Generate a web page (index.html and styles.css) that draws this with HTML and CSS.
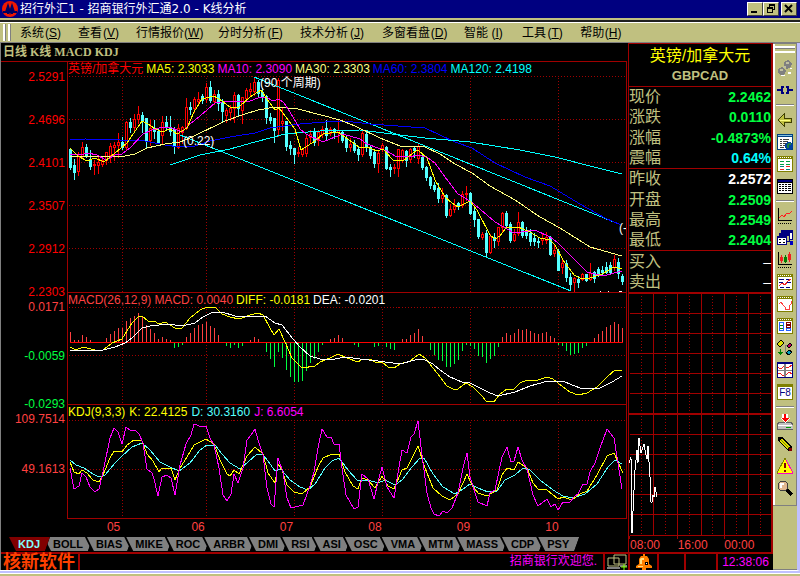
FILE: index.html
```html
<!DOCTYPE html>
<html lang="zh-CN">
<head>
  <meta charset="UTF-8">
  <meta name="viewport" content="width=device-width, initial-scale=1.0">
  <title>招行外汇1 - 招商银行外汇通2.0 - K线分析</title>
  <link rel="stylesheet" href="styles.css">
</head>
<body>

<header class="titlebar">
  <svg class="logo" width="16" height="16" viewBox="0 0 16 16">
    <circle cx="8" cy="8" r="8" fill="#f01800"/>
    <path d="M1 11h3l2-6 2 6 2-6 2 6h3M6 5v8M10 5v8" fill="none" stroke="#000060" stroke-width="2"/>
  </svg>
  <h1>招行外汇1 - 招商银行外汇通2.0 - K线分析</h1>
  <div class="window-buttons">
    <button aria-label="最小化"><svg width="12" height="10"><path d="M2 7h6v2H2z"/></svg></button>
    <button aria-label="还原"><svg width="12" height="10"><path d="M4 0h6v6H8V5h1V2H5v1H4zM2 3h6v6H2zm1 2v3h4V5z" fill-rule="evenodd"/></svg></button>
    <button class="close" aria-label="关闭"><svg width="12" height="10"><path d="M2 1l7 7M9 1L2 8" stroke="#000" stroke-width="2"/></svg></button>
  </div>
</header>

<nav class="menubar">
  <span class="grip"></span>
  <button>系统<span class="key">(<u>S</u>)</span></button>
  <button>查看<span class="key">(<u>V</u>)</span></button>
  <button>行情报价<span class="key">(<u>W</u>)</span></button>
  <button>分时分析<span class="key">(<u>F</u>)</span></button>
  <button>技术分析<span class="key">(<u>J</u>)</span></button>
  <button>多窗看盘<span class="key">(<u>D</u>)</span></button>
  <button>智能<span class="key">(<u>I</u>)</span></button>
  <button>工具<span class="key">(<u>T</u>)</span></button>
  <button>帮助<span class="key">(<u>H</u>)</span></button>
</nav>

<div class="workspace">
  <div class="content">
    <div class="panels">

      <!-- K线 / MACD / KDJ -->
      <main class="charts">
        <h2 class="subtitle">日线 K线 MACD KDJ</h2>

        <section class="pane pane-price">
          <div class="axis red"><span>2.5291</span><span>2.4696</span><span>2.4101</span><span>2.3507</span><span>2.2912</span><span>2.2303</span></div>
          <div class="plot">
            <div class="legend">
              <span class="red">英镑/加拿大元</span>
              <span class="yellow">MA5: 2.3033</span>
              <span class="magenta">MA10: 2.3090</span>
              <span class="cream">MA30: 2.3303</span>
              <span class="blue">MA60: 2.3804</span>
              <span class="aqua">MA120: 2.4198</span>
            </div>
            <svg viewBox="68 62 558 230" preserveAspectRatio="none">
              <g class="grid" transform="translate(.5 .5)">
                <path d="M68 76H626M68 119H626M68 162H626M68 205H626M68 248H626"/>
                <path d="M122 77V292M206 77V292M294 77V292M382 77V292M470 77V292M558 77V292"/>
              </g>
              <path id="candles-up" fill="#ff0000"/>
              <path id="candles-hole" fill="#000"/>
              <path id="candles-down" fill="#54ffff"/>
              <g class="lines">
                <polyline class="s-aqua" points="180,135 571,291"/>
                <polyline class="s-aqua" points="254,77 614,222"/>
                <polyline class="s-blue" points="70,140 85,139 120,140 145,141 165,145 180,147 195,146 210,141 230,137 255,133 270,128 300,124 325,122 345,121 370,124 425,128 455,142 472,148 495,163 525,177 550,186 580,204 605,218 621,225"/>
                <polyline class="s-aqua" points="170,165 200,155 230,149 255,142 285,134 320,131 360,130 400,135 425,138 470,142 520,150 555,157 590,166 622,174"/>
                <polyline class="s-cream" points="70,156 125,156 135,154 147,148 165,144 180,142 190,138 225,121 245,114 258,110 275,107 298,109 340,120 355,126 380,138 400,146 425,147 440,154 455,164 472,173 490,186 515,200 540,217 560,228 590,247 622,256"/>
                <polyline class="s-magenta" points="70,154 80,155 88,153 97,155 106,160 115,155 122,154 130,148 143,134 152,130 163,127 172,128 182,132 190,124 200,116 215,103 222,102 250,101 258,98 266,97 273,101 279,99 284,103 290,112 300,129 306,134 323,142 335,137 343,134 360,139 367,144 378,148 387,151 395,156 410,157 417,155 427,157 435,163 445,177 458,194 470,201 480,209 495,222 514,233 535,230 550,237 557,242 575,260 587,272 603,276 622,271"/>
                <polyline class="s-yellow" points="70,148 78,156 87,161 95,158 104,162 115,153 127,143 142,121 148,124 154,128 162,132 170,129 177,134 187,128 194,112 202,99 214,96 222,101 230,107 239,107 250,97 261,90 267,99 275,110 279,108 295,129 301,150 315,141 323,134 338,132 345,137 359,147 367,147 377,151 383,149 393,160 403,161 413,153 418,150 427,158 435,180 445,197 452,203 458,207 470,201 477,210 490,235 495,239 500,236 506,228 518,227 530,232 540,238 550,240 555,245 563,260 574,275 582,279 590,278 602,274 614,267 622,269"/>
              </g>
              <g class="notes">
                <text x="183" y="145">(0.22)</text>
                <text x="260" y="87">(90 个周期)</text>
                <text x="619" y="232">(-</text>
              </g>
              <path d="M600 291h1v1h-1zM608 291h1v1h-1zM619 291h3v1h-3z" fill="#fff"/>
            </svg>
          </div>
        </section>

        <section class="pane pane-macd">
          <div class="axis"><span class="coral">0.0171</span><span class="green">-0.0059</span><span class="green">-0.0293</span></div>
          <div class="plot">
            <div class="legend">
              <span class="coral">MACD(26,12,9)</span>
              <span class="coral">MACD: 0.0040</span>
              <span class="yellow">DIFF: -0.0181</span>
              <span class="white">DEA: -0.0201</span>
            </div>
            <svg viewBox="68 293 558 111" preserveAspectRatio="none">
              <g class="grid" transform="translate(.5 .5)">
                <path d="M68 307H626M68 355H626"/>
                <path d="M122 308V404M206 308V404M294 308V404M382 308V404M470 308V404M558 308V404"/>
              </g>
              <path id="macd-up" fill="#ff4040"/>
              <path id="macd-down" fill="#00ff40"/>
              <path d="M70 342h553v1H70z" fill="#ff0000"/>
              <g class="lines">
                <polyline class="s-yellow" points="70,347 76,350 83,347 95,350 103,350 112,343 122,339 132,323 138,317 142,316 148,321 154,321 159,324 165,322 175,328 182,328 190,318 200,310 207,307 215,307 222,314 230,317 239,319 250,315 258,313 263,315 270,328 274,335 279,329 285,342 292,358 302,368 315,366 320,362 330,358 338,354 347,358 358,362 363,359 370,359 377,363 382,362 388,367 394,368 400,364 410,361 419,354 425,358 437,373 447,386 453,389 458,389 466,383 473,387 482,396 486,401 494,402 500,394 507,389 514,389 520,383 527,380 538,380 547,377 553,379 563,387 570,392 578,395 587,393 597,387 607,377 615,370 622,370"/>
                <polyline class="s-white" points="70,351 85,350 103,350 115,347 125,343 132,338 142,328 150,326 168,324 182,326 195,323 203,317 213,312 222,312 235,316 250,316 265,316 275,323 282,325 293,339 300,347 310,356 320,359 330,360 345,357 360,359 378,361 400,364 415,360 423,359 433,364 440,370 450,377 462,382 470,383 480,388 490,393 498,396 515,392 530,386 548,381 563,381 572,385 583,389 600,388 612,382 622,376"/>
              </g>
            </svg>
          </div>
        </section>

        <section class="pane pane-kdj">
          <div class="axis coral"><span>109.7514</span><span>49.1613</span><span></span></div>
          <div class="plot">
            <div class="legend">
              <span class="yellow">KDJ(9,3,3)</span>
              <span class="yellow">K: 22.4125</span>
              <span class="cyan">D: 30.3160</span>
              <span class="magenta">J: 6.6054</span>
            </div>
            <svg viewBox="68 405 558 113" preserveAspectRatio="none">
              <g class="grid" transform="translate(.5 .5)">
                <path d="M68 420H626M68 469H626"/>
                <path d="M122 421V518M206 421V518M294 421V518M382 421V518M470 421V518M558 421V518"/>
              </g>
              <g class="lines">
                <polyline class="s-cyan" points="70,460 76,465 84,468 93,474 99,477 105,475 115,463 122,456 132,447 142,443 150,450 160,462 170,467 179,471 190,463 200,450 207,445 215,445 222,454 230,463 240,469 248,462 256,455 262,454 268,461 275,471 281,469 290,480 300,487 308,490 315,484 325,468 332,461 339,458 348,470 358,481 368,480 378,483 385,480 395,485 402,480 412,467 420,458 424,458 433,474 443,487 455,494 463,489 470,484 478,488 488,492 497,491 505,480 515,475 523,468 530,470 540,480 553,490 563,496 573,498 585,494 597,484 608,467 615,460 622,464"/>
                <polyline class="s-yellow" points="70,462 74,472 79,474 82,470 87,473 93,480 99,482 103,475 110,458 114,451 122,452 127,445 134,440 142,441 147,454 153,461 159,472 162,468 171,468 175,480 180,468 187,457 194,445 206,439 214,444 220,460 227,474 230,476 234,470 239,474 243,465 247,456 255,447 263,454 268,473 275,483 278,464 282,470 287,485 294,492 302,494 310,487 318,467 323,458 332,454 339,454 345,472 353,486 358,489 362,478 368,480 375,488 382,476 388,486 394,489 402,470 407,468 418,446 425,468 433,488 442,496 450,500 458,494 467,474 472,485 478,493 487,496 497,490 502,475 507,468 514,470 518,462 527,468 533,483 538,489 547,490 558,499 563,497 572,500 580,494 587,491 597,475 607,456 614,453 618,462 623,473"/>
                <polyline class="s-magenta" points="70,468 74,489 79,486 82,473 86,477 90,487 95,492 99,489 103,472 110,438 114,428 118,432 122,444 126,427 130,430 135,430 139,434 143,443 147,469 152,473 154,479 158,496 162,477 167,475 171,478 175,495 180,465 186,444 191,435 194,424 202,427 206,426 210,438 214,445 219,468 223,495 227,501 231,494 234,474 238,483 243,468 247,440 251,435 255,429 258,440 263,455 267,488 271,504 274,507 278,458 283,472 287,498 291,508 303,505 310,486 314,472 318,448 322,429 327,437 331,437 334,444 339,444 342,468 346,495 354,509 358,507 362,474 368,479 374,499 378,482 382,467 387,487 394,498 398,473 402,450 407,453 411,437 414,434 418,421 422,455 427,493 431,508 434,514 439,516 443,511 447,513 452,508 458,493 463,468 467,453 470,477 478,502 487,506 490,493 495,490 502,457 507,447 511,462 514,461 518,447 522,460 527,469 533,495 538,506 547,499 551,507 555,504 558,510 563,502 570,502 574,497 578,494 583,484 587,484 590,472 595,463 600,448 607,429 614,438 618,463 622,489"/>
              </g>
            </svg>
          </div>
        </section>

        <div class="months"><span>05</span><span>06</span><span>07</span><span>08</span><span>09</span><span>10</span></div>

        <div class="tabs">
          <button class="active"><span>KDJ</span></button>
          <button><span>BOLL</span></button>
          <button><span>BIAS</span></button>
          <button><span>MIKE</span></button>
          <button><span>ROC</span></button>
          <button><span>ARBR</span></button>
          <button><span>DMI</span></button>
          <button><span>RSI</span></button>
          <button><span>ASI</span></button>
          <button><span>OSC</span></button>
          <button><span>VMA</span></button>
          <button><span>MTM</span></button>
          <button><span>MASS</span></button>
          <button><span>CDP</span></button>
          <button><span>PSY</span></button>
        </div>
      </main>

      <!-- 报价 -->
      <aside class="quote">
        <div class="quote-head">
          <h2>英镑/加拿大元</h2>
          <h3>GBPCAD</h3>
        </div>
        <table class="quote-table">
          <tbody>
            <tr><th>现价</th><td class="green">2.2462</td></tr>
            <tr><th>涨跌</th><td class="green">0.0110</td></tr>
            <tr><th>涨幅</th><td class="green">-0.4873%</td></tr>
            <tr><th>震幅</th><td class="aqua">0.64%</td></tr>
          </tbody>
          <tbody>
            <tr><th>昨收</th><td class="white">2.2572</td></tr>
            <tr><th>开盘</th><td class="green">2.2509</td></tr>
            <tr><th>最高</th><td class="green">2.2549</td></tr>
            <tr><th>最低</th><td class="green">2.2404</td></tr>
          </tbody>
          <tbody>
            <tr><th>买入</th><td class="white dash">–</td></tr>
            <tr><th>卖出</th><td class="white dash">–</td></tr>
          </tbody>
        </table>
        <svg class="intraday" viewBox="629 292 142 247" preserveAspectRatio="none">
          <g class="solid" transform="translate(.5 .5)">
            <path d="M653 293V535M677 293V538M701 293V535M724 293V538M748 293V535M629 535V538"/>
            <path d="M629 313H771M629 333H771M629 353H771M629 373H771M629 393H771M629 434H771M629 454H771M629 474H771M629 494H771M629 514H771M629 535H771"/>
          </g>
          <path d="M629 292h142v2H629zM629 413h142v2H629z" fill="#a00000"/>
          <g class="grid" transform="translate(.5 .5)">
            <path d="M641 295V535M665 295V535M689 295V535M712 295V535M736 295V535M760 295V535"/>
          </g>
          <g class="lines">
            <polyline class="s-white" points="629,463 631,457 632,533 634,490 635,470 637,450 638,463 639,438 641,453 644,444 645,450 647,459 648,446 650,477 651,502 652,502 653,495 654,497 655,487 657,497"/>
          </g>
        </svg>
        <div class="times"><span>08:00</span><span>16:00</span><span>00:00</span></div>
      </aside>
    </div>

    <footer class="status">
      <strong>核新软件</strong>
      <span class="message">招商银行欢迎您.</span>
      <span class="cell cell-net">
        <svg width="22" height="16" viewBox="0 0 22 16">
          <path d="M8 1h12v9H8zM2 4h11v8H2z" fill="#000" stroke="#c0c080" stroke-width="1"/>
          <path d="M1 13h13v2H1zM14 11h7v2h-7z" fill="#808080"/>
          <path d="M15 13h6M18 10v6" stroke="#80ff00"/>
        </svg>
      </span>
      <span class="cell cell-bell">
        <svg width="16" height="16" viewBox="0 0 16 16">
          <path d="M7 0h2v2h2l2 3v5l3 2v2H10v2H6v-2H0v-2l3-2V5l2-3h2z" fill="#ff8000"/>
          <path d="M5 4h3v2H6v4H4V5zM2 12h5v1H2z" fill="#ffe080"/>
          <path d="M9 8h3v3H9z" fill="#000"/><path d="M10 9h1v1h-1z" fill="#fff"/>
        </svg>
      </span>
      <span class="cell cell-a"></span>
      <span class="cell cell-b"></span>
      <time class="cell cell-time">12:38:06</time>
    </footer>
  </div>

  <div class="side">
    <div class="toolbar">
      <span class="ridge"></span>
      <button aria-label="连接"><svg viewBox="0 0 16 16"><path d="M7 2l4-2 4 3-1 4-4 2-3-2zM1 9l4-2 4 3-1 4-4 2-3-3z" fill="#808080"/><path d="M9 2h3v2H9zM6 6h3v2H6zM3 9h3v2H3z" fill="#c0c0a0"/><path d="M4 15h4v1H4zM11 12h3v2h-3zM13 8h2v1h-2z" fill="#fff"/></svg></button>
      <button aria-label="断开"><svg viewBox="0 0 16 16"><path d="M0 7h4V4h3v2H6v4h1v2H4V9H0zM16 7h-4V4H9v2h1v4H9v2h3V9h4z" fill="#000080"/></svg></button>
      <hr>
      <button aria-label="返回"><svg viewBox="0 0 16 16"><path d="M1 8l6-6v4h7v4H7v4z" fill="#c0c040" stroke="#404000"/><path d="M3 8h10" stroke="#ffff80"/></svg></button>
      <button aria-label="网页"><svg viewBox="0 0 16 16"><path d="M0 0h16v16H0z" fill="#004080"/><path d="M1 3h14v12H1z" fill="#fff"/><path d="M1 1h14v1H1z" fill="#80c0e0"/><path d="M3 5h2v1H3zM6 5h6v1H6zM3 7h2v1H3zM6 7h5v1H6zM3 9h2v1H3zM6 9h3v1H6zM3 11h2v1H3zM6 11h2v1H6zM3 13h4v1H3z" fill="#404040"/><circle cx="12" cy="12" r="4" fill="#0040a0"/><path d="M11 9h3v2h-2v3h-2v-2z" fill="#208040"/></svg></button>
      <button aria-label="报价"><svg viewBox="0 0 16 16"><path d="M0 0h16v16H0z" fill="#808000"/><path d="M1 3h14v12H1z" fill="#fff"/><path class="holes" d="M1 1h14"/><path d="M3 5h4v1H3zM9 5h4v1H9zM3 8h4v1H3zM9 8h4v1H9z" fill="#00a040"/><path d="M3 10h4v1H3zM9 13h4v1H9z" fill="#008080"/><path d="M3 13h4v1H3zM9 10h4v1H9z" fill="#f02020"/></svg></button>
      <button aria-label="列表"><svg viewBox="0 0 16 16"><path d="M0 1h16v15H0z"/><path d="M1 5h14v10H1z" fill="#fff"/><path d="M1 2h14v2H1z" fill="#000080"/><path d="M2 6h2v1H2zM5 6h2v1H5zM8 6h2v1H8zM11 6h3v1h-3zM2 8h2v1H2zM5 8h2v1H5zM8 8h2v1H8zM11 8h3v1h-3zM2 10h2v1H2zM5 10h2v1H5zM8 10h2v1H8zM11 10h3v1h-3zM2 12h2v1H2zM5 12h2v1H5zM8 12h2v1H8zM11 12h3v1h-3z"/></svg></button>
      <hr>
      <button aria-label="走势"><svg viewBox="0 0 16 16"><path d="M1 0h1v12h13v1H1z"/><path d="M1 15h1v1H1zM3 15h1v1H3zM5 15h1v1H5zM7 15h1v1H7zM9 15h1v1H9zM11 15h1v1h-1zM13 15h1v1h-1z"/><path d="M2 10l3-3 2 2 3-4 2 1 3-3" fill="none" stroke="#ff2020"/></svg></button>
      <button aria-label="窗口"><svg viewBox="0 0 16 16"><path d="M4 0h12v10H4z" fill="#000080"/><path d="M5 3h10v6H5z" fill="#fff"/><path d="M2 3h11v9H2z" fill="#000080"/><path d="M3 6h9v5H3z" fill="#c0c080"/><path d="M0 6h10v9H0z" fill="#000080"/><path d="M1 8h8v6H1z" fill="#fff"/><path d="M2 9h2v1H2zM6 9h2v1H6zM2 12h2v1H2zM6 12h2v1H6z"/><path d="M13 11h3v4h-3z" fill="#0000c0"/></svg></button>
      <button aria-label="K线"><svg viewBox="0 0 16 16"><path d="M1 0h1v12h13v1H1z"/><path d="M1 15h1v1H1zM3 15h1v1H3zM5 15h1v1H5zM7 15h1v1H7zM9 15h1v1H9zM11 15h1v1h-1zM13 15h1v1h-1z"/><path d="M3 5h3v4H3zM4 3h1v8H4zM11 2h3v6h-3zM12 0h1v10h-1z" fill="#f02020"/><path d="M7 5h3v5H7zM8 3h1v8H8z" fill="#008000"/></svg></button>
      <button aria-label="指标"><svg viewBox="0 0 16 16"><path d="M0 0h16v16H0z" fill="#808000"/><path d="M1 3h14v12H1z" fill="#fff"/><path class="holes" d="M1 1h14"/><path d="M2 5h5v1H2zM9 5h5v1H9zM2 8h4v1H2zM10 8h4v1h-4zM3 13h4v1H3zM9 13h4v1H9z" fill="#000080"/><path d="M2 12l3-3 3 2 3-4 3-2" fill="none" stroke="#f02020"/></svg></button>
      <button aria-label="分时"><svg viewBox="0 0 16 16"><path d="M0 0h16v16H0z" fill="#808000"/><path d="M1 3h14v12H1z" fill="#fff"/><path class="holes" d="M1 1h14"/><path d="M2 8l2-2 2 3 2 2v2h4v-3l2-2V5" fill="none" stroke="#ff4040"/></svg></button>
      <button aria-label="对比"><svg viewBox="0 0 16 16"><path d="M0 0h16v16H0z" fill="#808000"/><path d="M1 3h14v12H1z" fill="#fff"/><path class="holes" d="M1 1h14"/><path d="M2 4h5v9H2zm1 1v7h3V5z" fill="#2060ff" fill-rule="evenodd"/><path d="M3 7h3v1H3zM3 10h3v1H3z" fill="#008000"/><path d="M9 4h5v6H9zm1 1v1h3V5zm0 3v1h3V8z" fill="#800000" fill-rule="evenodd"/><path d="M9 10h5v3H9zm1 1v1h3v-1z" fill="#2060ff" fill-rule="evenodd"/></svg></button>
      <button aria-label="关联"><svg viewBox="0 0 16 16"><path d="M8 5h3M8 6v6h2" fill="none" stroke="#808080"/><path d="M0 4l4-4 3 3-4 4z" fill="#e0e000" stroke="#000"/><path d="M10 6l3-3 2 2-3 3z" fill="#c00060" stroke="#000"/><path d="M9 13l3-3 3 2-3 3z" fill="#00a0c0" stroke="#000"/><path d="M3 9h1v3h2l-2 3H3l-2-3h2z" fill="#008000"/></svg></button>
      <button aria-label="多图"><svg viewBox="0 0 16 16"><path d="M0 0h16v16H0z" fill="#000080"/><path d="M1 2h14v13H1z" fill="#fff"/><path d="M7 2h2v13H7zM1 8h14v1H1z" fill="#808080"/><path d="M1 5l2 2 2-1 2-2M9 6l3-1 3-2M1 12l2-1 2 2 2 1M9 13l3-3 3 2" fill="none" stroke="#f02020"/></svg></button>
      <button class="f8" aria-label="F8 切换周期"><span>F8</span></button>
      <hr>
      <button aria-label="下载"><svg viewBox="0 0 16 16"><path d="M2 8h12l2 3v4H0v-4z" fill="#c0c0c0" stroke="#606060"/><path d="M1 11h14v1H1z" fill="#fff"/><path d="M9 13h5v1H9z" fill="#00a000"/><path d="M5 0h6v4h2l-5 5-5-5h2z" fill="#fff"/><path d="M7 0h2v4h3L8 8 4 4h3z" fill="#ff0000"/></svg></button>
      <button aria-label="画线"><svg viewBox="0 0 16 16"><path d="M1 1h4l10 10v4h-4L1 5z"/><path d="M4 4l8 8" stroke="#e0e000" stroke-width="3"/><path d="M4 4l8 8" stroke="#808000"/><path d="M12 12h3v3h-3z" fill="#800000"/></svg></button>
      <button aria-label="预警"><svg viewBox="0 0 16 16"><path d="M8 0l8 15H0z" fill="#ffff00" stroke="#808000"/><path d="M9 2l7 13H1" fill="none" stroke="#ff00c0"/><path d="M7 5h2v5H7zM7 12h2v2H7z" fill="#800000"/></svg></button>
      <button aria-label="查找"><svg viewBox="0 0 16 16"><path d="M9 9l6 6" stroke="#000" stroke-width="3"/><circle cx="6" cy="6" r="5" fill="#e0b890" stroke="#404040"/><path d="M3 3h4v2H5v3H3z" fill="#fff"/></svg></button>
    </div>
  </div>
</div>

<script src="chart.js"></script>
</body>
</html>
```
FILE: styles.css
```css
* {
  box-sizing: border-box;
}
body {
  margin: 0;
  min-height: 100vh;
  background-color: #c0c080;
  font-family: "Liberation Sans", "Noto Sans CJK SC", sans-serif;
  font-size: 12px;
  line-height: 12px;
}
h1, h2, h3 {
  margin: 0;
  font-size: 12px;
  font-weight: normal;
}
button {
  border: none;
  padding: 0;
  margin: 0;
  background: none;
  font-family: inherit;
  font-size: inherit;
  line-height: inherit;
  color: inherit;
}
svg {
  display: block;
}

/* colours */
.red { color: #ff0000; }
.coral { color: #ff4040; }
.green { color: #00ff40; }
.yellow { color: #ffff00; }
.cream { color: #ffff80; }
.magenta { color: #ff00ff; }
.blue { color: #0000ff; }
.aqua { color: #00ffff; }
.cyan { color: #54ffff; }
.white { color: #ffffff; }

/* title bar */
.titlebar {
  display: flex;
  align-items: center;
  gap: 2px;
  height: 18px;
  padding: 0 3px 0 2px;
  background-color: #000080;
  color: #fff;
}
.titlebar h1 {
  flex: 1;
  font-family: "DejaVu Sans", "Noto Sans CJK SC", sans-serif;
}
.window-buttons {
  display: flex;
}
.window-buttons button {
  width: 16px;
  height: 14px;
  padding: 1px;
  background-color: #c0c080;
  border: 1px solid;
  border-color: #fff #404040 #404040 #fff;
}
.window-buttons .close {
  margin-left: 2px;
}

/* menu */
.menubar {
  display: flex;
  align-items: center;
  gap: 16px;
  height: 25px;
  padding-left: 3px;
  background-color: #c0c080;
  border-bottom: 1px solid #808080;
  box-shadow: inset 0 2px #c0c080, inset 0 4px #202020, inset 0 5px #fff;
  color: #000;
}
.menubar button {
  display: flex;
  padding-top: 5px;
}
.menubar .key {
  width: 18px;
  text-align: center;
}
.menubar .grip {
  align-self: flex-end;
  width: 8px;
  height: 17px;
  margin: 0 -7px 1px 0;
  background: linear-gradient(90deg, #fff 2px, #808080 2px 3px, #c0c080 3px 5px, #fff 5px 7px, #808080 7px);
}

.workspace {
  display: flex;
  border-right: 3px solid #c0c0ff;
  border-bottom: 1px solid #fff;
  box-shadow: 0 1px #c0c0ff, 0 2px #c0c0ff, 0 3px #fff;
}
.content {
  flex: 1;
  min-width: 0;
  border-left: 1px solid #808080;
  background-color: #000;
}
.panels {
  display: flex;
}

/* charts */
.charts {
  flex: 1;
  min-width: 0;
  padding-right: 1px;
}
.subtitle {
  height: 18px;
  padding: 2px 2px 0;
  font-family: "Liberation Serif", "Noto Sans CJK SC", serif;
  font-weight: bold;
  line-height: 14px;
  color: #c0c080;
}
.pane {
  display: flex;
}
.pane-price {
  height: 231px;
  border-top: 1px solid #a00000;
}
.pane-macd {
  height: 112px;
}
.pane-kdj {
  height: 115px;
}
.axis {
  display: flex;
  flex-direction: column;
  justify-content: space-between;
  width: 66px;
  margin: 9px 0 -6px;
  padding-right: 2px;
  text-align: right;
}
.axis span {
  height: 12px;
}
.plot {
  flex: 1;
  min-width: 0;
  position: relative;
  border: solid #a00000;
  border-width: 1px 1px 0;
}
.pane-price .plot {
  border-top: none;
}
.pane-kdj .plot {
  border-bottom-width: 1px;
}
.plot svg {
  width: 100%;
  height: 100%;
  shape-rendering: crispEdges;
}
.legend {
  position: absolute;
  top: 1px;
  left: 0;
  display: flex;
  gap: 3px;
  white-space: nowrap;
}
.pane-kdj .legend {
  gap: 4px;
}
.grid path {
  fill: none;
  stroke: #a00000;
  stroke-dasharray: 1 2;
}
.solid path {
  fill: none;
  stroke: #a00000;
}
.lines polyline {
  fill: none;
  stroke-width: 1px;
}
.s-aqua { stroke: #00ffff; }
.s-cyan { stroke: #54ffff; }
.s-blue { stroke: #0000ff; }
.s-cream { stroke: #ffff80; }
.s-magenta { stroke: #ff00ff; }
.s-yellow { stroke: #ffff00; }
.s-white { stroke: #ffffff; }
.notes text {
  fill: #fff;
  font-size: 12px;
}
.months {
  display: grid;
  grid-template-columns: 54fr 84fr 88fr 88fr 88fr 88fr 68fr;
  height: 18px;
  margin-left: 65px;
  padding-top: 2px;
  text-align: right;
  color: #ff4040;
}

/* indicator tabs */
.tabs {
  display: flex;
  height: 15px;
  padding-left: 6px;
}
.tabs button {
  height: 14px;
  margin-left: -8px;
  background-color: #000;
  font-size: 11px;
  font-weight: bold;
  color: #000;
  clip-path: polygon(0 0, 100% 0, calc(100% - 5px) 100%, 7px 100%);
}
.tabs span {
  display: block;
  padding: 1px 10px 1px 11px;
  background-color: #808080;
  clip-path: polygon(2px 0, 100% 0, calc(100% - 5px) 100%, 9px 100%);
}
.tabs .active {
  position: relative;
  z-index: 1;
  margin-left: 0;
  color: #80ffff;
}
.tabs .active span {
  background-color: #800000;
}

/* quote panel */
.quote {
  width: 145px;
  border: solid #a00000;
  border-width: 1px 2px 0 1px;
}
.quote-head {
  height: 42px;
  padding-top: 2px;
  text-align: center;
}
.quote-head h2 {
  font-size: 16px;
  line-height: 20px;
  color: #ffff00;
}
.quote-head h3 {
  font-size: 13px;
  font-weight: bold;
  line-height: 20px;
  color: #c0c080;
}
.quote-table {
  width: 100%;
  height: 206px;
  border-collapse: collapse;
}
.quote-table tbody {
  border-top: 1px solid #a00000;
}
.quote-table th {
  padding: 0;
  font-size: 16px;
  font-weight: normal;
  line-height: 18px;
  text-align: left;
  color: #c0c080;
}
.quote-table td {
  padding: 0;
  font-size: 14px;
  font-weight: bold;
  line-height: 18px;
  text-align: right;
}
.quote-table .dash {
  font-weight: normal;
}
.intraday {
  width: 100%;
  height: 247px;
  shape-rendering: crispEdges;
}
.times {
  display: grid;
  grid-template-columns: 48fr 47fr 47fr;
  padding-left: 1px;
  color: #ff4040;
}

/* status bar */
.status {
  display: flex;
  height: 18px;
  border-top: 2px solid #a00000;
  line-height: 16px;
}
.status strong {
  width: 79px;
  padding-left: 2px;
  border-right: 2px solid #a00000;
  font-size: 18px;
  color: #ff4000;
}
.status .message {
  flex: 1;
  padding-right: 6px;
  line-height: 14px;
  text-align: right;
  color: #ff00ff;
}
.status .cell {
  display: flex;
  align-items: center;
  justify-content: center;
  border-left: 2px solid #a00000;
}
.status .cell-net { width: 25px; }
.status .cell-bell { width: 29px; }
.status .cell-a { width: 27px; }
.status .cell-b { width: 32px; }
.status .cell-time {
  width: 57px;
  color: #ff00ff;
}

/* right toolbar */
.side {
  width: 24px;
  background-color: #c0c080;
  border-bottom: 1px solid #808080;
}
.toolbar {
  display: flex;
  flex-direction: column;
  align-items: center;
  padding: 0 0 6px 1px;
  border: solid #808080;
  border-width: 1px 1px 1px 0;
  box-shadow: inset 2px 0 #fff;
}
.toolbar .ridge {
  width: 20px;
  height: 7px;
  margin: 2px 0 4px;
  border: solid #fff;
  border-width: 2px 0;
  background: linear-gradient(#808080 1px, #c0c080 1px);
}
.toolbar button {
  display: flex;
  align-items: center;
  justify-content: center;
  width: 22px;
  height: 22px;
}
.toolbar svg {
  width: 16px;
  height: 16px;
  shape-rendering: crispEdges;
}
.toolbar .holes {
  fill: none;
  stroke: #fff;
  stroke-dasharray: 1 1;
}
.toolbar hr {
  width: 18px;
  height: 2px;
  margin: 3px 0;
  border: solid;
  border-width: 1px 0;
  border-color: #808080 #fff #fff;
}
.toolbar .f8 span {
  width: 16px;
  height: 16px;
  border: 1px solid #808000;
  border-top-width: 3px;
  background-color: #fff;
  font-size: 10px;
  color: #000080;
}
```
FILE: chart.js
```js
// direction, body top, body bottom, high, low
const candles = `
d149,167,148,169 d165,172,159,179 u156,171,152,175 u147,156,142,157 d147,155,144,157 d159,166,150,169
u164,165,160,174 u162,165,156,173 u160,164,157,166 u152,160,152,164 u146,155,143,162 u145,147,142,160
u142,145,133,157 d142,147,137,149 u122,147,121,149 d122,127,118,132 u119,127,114,131 u114,119,106,123
d115,120,112,132 d118,141,118,148 u128,140,120,145 d128,131,120,138 d131,143,128,143 u122,135,116,144
d122,127,116,130 d127,131,116,135 d129,146,127,153 u128,147,124,148 u127,132,126,143 u107,128,98,129
d107,109,102,114 u99,108,97,112 u99,101,92,103 d96,100,94,103 u87,99,83,102 d87,100,81,102
u94,101,90,104 d94,103,90,110 d103,111,99,121 u110,115,108,122 u108,112,105,120 u95,108,92,122
d95,108,94,115 u97,110,97,123 u90,98,88,100 u89,91,83,95 u82,91,77,95 d82,93,80,96
d92,96,88,101 d96,117,95,123 d117,120,113,123 d118,130,118,142 u80,129,78,136 u121,123,107,130
d121,146,121,150 d145,148,141,154 d148,154,148,163 u152,153,147,156 u149,154,148,156 u138,153,135,156
u134,137,130,142 d132,142,128,145 u132,140,130,145 u129,134,126,137 d128,135,120,140 u129,133,127,135
d129,132,128,138 u130,132,120,142 d132,140,130,142 d138,147,136,151 u144,147,138,151 d143,150,140,152
d149,154,146,160 u133,154,131,156 d134,147,130,151 d147,155,146,158 d152,163,151,167 u153,163,150,172
u145,148,143,151 d147,168,146,169 d167,169,164,176 u167,168,164,173 u149,168,149,176 u150,160,149,162
d151,160,150,166 u149,159,148,162 d148,150,146,157 u146,158,143,163 d157,167,154,169 d167,177,166,180
d177,185,176,188 d185,189,182,191 d188,198,183,202 u195,198,188,202 d195,215,194,217 u209,215,204,216
u206,209,199,212 d203,206,202,209 u194,205,191,207 u193,194,186,200 d193,213,192,214 d211,219,207,226
d219,236,219,238 u234,237,232,239 d233,252,230,257 u236,252,234,253 d237,240,233,247 u227,241,227,245
u213,227,212,232 d213,225,211,228 d224,240,222,242 u234,240,229,241 u222,233,212,235 d222,235,221,237
d232,235,227,238 d233,241,229,245 d238,241,233,245 d241,242,237,247 u238,240,233,244 u237,240,232,243
d237,254,236,255 u250,253,244,256 d251,270,249,270 u263,267,259,273 d263,277,260,281 d277,284,273,290
u278,282,277,292 d279,282,276,287 u274,279,273,280 d274,280,274,281 u273,279,263,280 d272,278,271,282
d269,274,267,276 d270,272,266,274 d267,272,262,273 d265,272,262,274 u259,267,255,270 d262,273,258,278
d276,281,274,284`.trim().split(/\s+/);

const macd = [
  10, 2, 2, 7, 5, 2, 0, 0, 0, 4, 8, 11, 14, 14, 21, 24, 26, 29, 25, 17,
  13, 9, 3, 5, 3, 2, -5, -4, -2, 5, 9, 14, 17, 18, 20, 16, 14, 7, 0, -3,
  -5, -2, -5, -3, 0, 2, 5, 3, 0, -9, -16, -24, -9, -15, -27, -34, -39, -39, -38, -28,
  -20, -16, -9, -2, 0, 3, 4, 7, 4, 0, 0, -2, -4, 0, 0, 0, -4, -3, 0, -4,
  -6, -7, 0, 3, 3, 7, 9, 13, 6, 0, -7, -12, -17, -18, -24, -24, -21, -17, -8, -2,
  -3, -6, -13, -14, -20, -16, -13, -4, 5, 9, 7, 9, 13, 12, 13, 11, 9, 8, 9, 10,
  6, 4, -2, -3, -8, -12, -11, -10, -5, -3, 0, 4, 8, 11, 15, 17, 20, 18, 14
];

const left = 70;
const step = 4;
const zero = 342;

function box(x, y, w, h) {
  return `M${x} ${y}h${w}v${h}h${-w}z`;
}

function setPath(id, d) {
  document.getElementById(id).setAttribute('d', d);
}

function drawCandles() {
  let up = '', hole = '', down = '';
  candles.forEach((c, i) => {
    const x = left + i * step;
    const [top, bottom, high, low] = c.slice(1).split(',').map(Number);
    // wick and body are separate pieces so that their overlap stays filled
    const shape = box(x, high, 1, low - high + 1) + box(x - 1, top, 3, bottom - top + 1);
    if (c[0] === 'u') {
      up += shape;
      if (bottom - top > 1) hole += box(x, top + 1, 1, bottom - top - 1);
    } else {
      down += shape;
    }
  });
  setPath('candles-up', up);
  setPath('candles-hole', hole);
  setPath('candles-down', down);
}

function drawMacd() {
  let up = '', down = '';
  macd.forEach((v, i) => {
    const x = left + i * step;
    if (v > 0) up += box(x, zero - v, 1, v);
    if (v < 0) down += box(x, zero + 1, 1, -v);
  });
  setPath('macd-up', up);
  setPath('macd-down', down);
}

drawCandles();
drawMacd();
```
